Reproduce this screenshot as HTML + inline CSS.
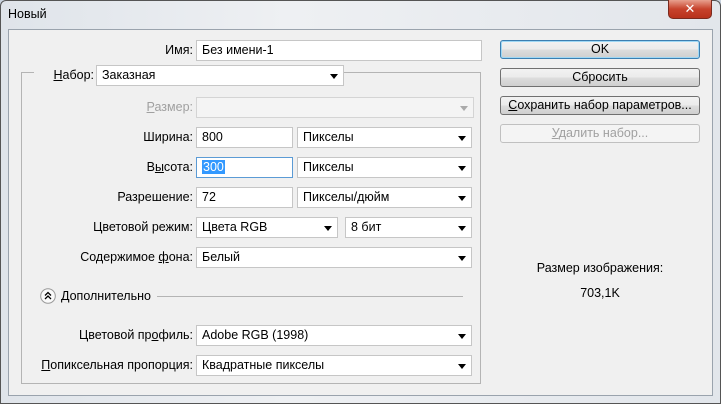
<!DOCTYPE html>
<html><head><meta charset="utf-8"><style>
*{box-sizing:border-box;margin:0;padding:0}
body{width:721px;height:404px;overflow:hidden;background:#c9d3df;font-family:"Liberation Sans","DejaVu Sans",sans-serif;font-size:12.5px;color:#000;position:relative}
.win{position:absolute;left:0;top:0;width:721px;height:404px;background:linear-gradient(90deg,#dfe4ea,#eef0f3 40%,#e2e6eb);border:1px solid #555;border-radius:6px 6px 0 0}
.title{position:absolute;left:8px;top:7px;font-size:12.5px}
.close{position:absolute;left:668px;top:0;width:44px;height:19px;background:linear-gradient(#e8a08e,#c7422c 50%,#b8321c);border:1px solid #7a2a1e;border-top:none;border-radius:0 0 5px 5px;color:#fff;font-weight:bold;text-align:center;line-height:17px;font-size:13px}
.cont{position:absolute;left:8px;top:29px;width:705px;height:367px;background:#f0f0f0;border:1px solid #9aa3ad}
.a{position:absolute}
.lbl{position:absolute;text-align:right;line-height:20px;white-space:nowrap}
.in{position:absolute;background:#fff;border:1px solid #c6c6c6;height:21px;line-height:19px;padding-left:5px}
.sel::after{content:"";position:absolute;right:5px;top:8px;border-left:4px solid transparent;border-right:4px solid transparent;border-top:5px solid #000}
.dis::after{border-top-color:#aaa}
.btn{position:absolute;left:500px;width:200px;height:19px;border:1px solid #707070;border-radius:3px;background:linear-gradient(#f2f2f2,#ebebeb 50%,#dddddd 51%,#cfcfcf);text-align:center;line-height:17px}
.group{position:absolute;left:21px;top:72px;width:460px;height:312px;border:1px solid #b4b4b4}
u{text-decoration:underline}
</style></head><body>
<div class="win"></div>
<div class="title">Новый</div>
<div class="close">✕</div>
<div class="cont"></div>
<div class="group"></div>
<div class="a" style="left:34px;top:66px;width:62px;height:20px;background:#f0f0f0"></div>

<div class="lbl" style="left:90px;top:40px;width:103px">Имя:</div>
<div class="in" style="left:196px;top:40px;width:286px">Без имени-1</div>
<div class="lbl" style="left:30px;top:65px;width:64px"><u>Н</u>абор:</div>
<div class="in sel" style="left:96px;top:65px;width:248px">Заказная</div>
<div class="lbl" style="left:90px;top:97px;width:103px;color:#a0a0a0"><u>Р</u>азмер:</div>
<div class="in sel dis" style="left:196px;top:97px;width:278px;background:#f4f4f4;border-color:#d4d4d4"></div>

<div class="lbl" style="left:90px;top:127px;width:103px">Ширина:</div>
<div class="in" style="left:196px;top:127px;width:97px">800</div>
<div class="in sel" style="left:297px;top:127px;width:175px">Пикселы</div>
<div class="lbl" style="left:90px;top:157px;width:103px">В<u>ы</u>сота:</div>
<div class="in" style="left:196px;top:157px;width:97px;border-color:#5b9bd5"><span style="background:#3399ff;color:#fff;padding:0 1px">300</span></div>
<div class="in sel" style="left:297px;top:157px;width:175px">Пикселы</div>
<div class="lbl" style="left:70px;top:187px;width:123px">Разрешение:</div>
<div class="in" style="left:196px;top:187px;width:97px">72</div>
<div class="in sel" style="left:297px;top:187px;width:175px">Пикселы/дюйм</div>
<div class="lbl" style="left:40px;top:217px;width:153px">Цветовой режим:</div>
<div class="in sel" style="left:196px;top:217px;width:142px">Цвета RGB</div>
<div class="in sel" style="left:345px;top:217px;width:127px">8 бит</div>
<div class="lbl" style="left:30px;top:247px;width:163px">Содержимое <u>ф</u>она:</div>
<div class="in sel" style="left:196px;top:247px;width:276px">Белый</div>

<svg class="a" style="left:40px;top:288px" width="16" height="16" viewBox="0 0 16 16"><circle cx="8" cy="8" r="7.3" fill="#fafafa" stroke="#999"/><path d="M5 7.5L8 4.5L11 7.5M5 11L8 8L11 11" fill="none" stroke="#000" stroke-width="1.3"/></svg>
<div class="a" style="left:61px;top:289px;line-height:14px">Дополнительно</div>
<div class="a" style="left:157px;top:296px;width:306px;height:1px;background:#b4b4b4"></div>

<div class="lbl" style="left:30px;top:325px;width:163px">Цветовой пр<u>о</u>филь:</div>
<div class="in sel" style="left:196px;top:325px;width:276px">Adobe RGB (1998)</div>
<div class="lbl" style="left:10px;top:355px;width:183px"><u>П</u>опиксельная пропорция:</div>
<div class="in sel" style="left:196px;top:355px;width:276px">Квадратные пикселы</div>

<div class="btn" style="top:40px;border-color:#3c7fb1;box-shadow:inset 0 0 0 1px #9fd8f5">OK</div>
<div class="btn" style="top:68px">Сбросить</div>
<div class="btn" style="top:96px"><u>С</u>охранить набор параметров...</div>
<div class="btn" style="top:124px;background:#f4f4f4;border-color:#c0c0c0;color:#a0a0a0"><u>У</u>далить набор...</div>

<div class="a" style="left:500px;top:261px;width:200px;text-align:center">Размер изображения:</div>
<div class="a" style="left:500px;top:286px;width:200px;text-align:center">703,1K</div>
</body></html>
